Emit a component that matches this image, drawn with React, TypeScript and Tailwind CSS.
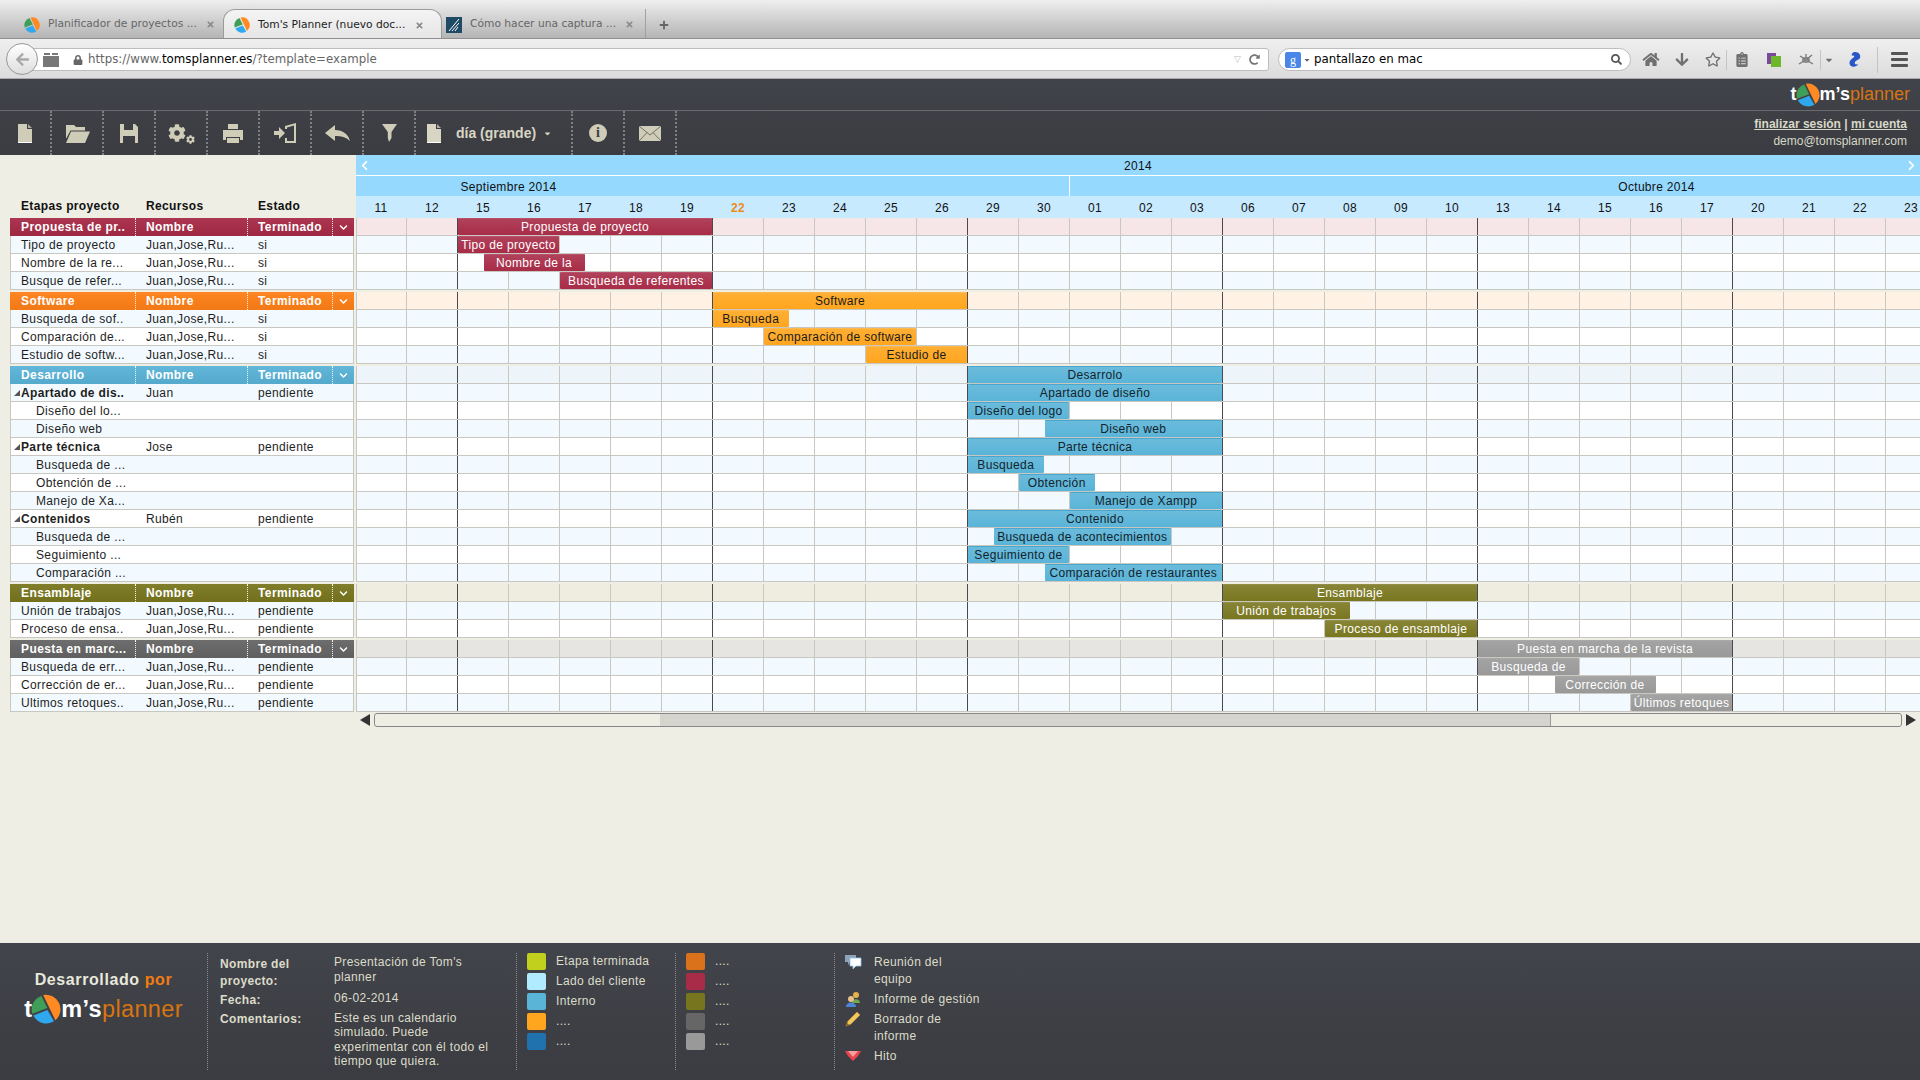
import React from "react";
import {
  FaCog, FaHome, FaArrowDown, FaRegStar, FaClipboardList, FaSearch, FaArrowLeft, FaRedoAlt, FaLock, FaTimes, FaPlus, FaChevronDown, FaChevronLeft, FaChevronRight, FaCaretDown,
} from "react-icons/fa";

const W = 51;
const days = ["11","12","15","16","17","18","19","22","23","24","25","26","29","30","01","02","03","06","07","08","09","10","13","14","15","16","17","20","21","22","23"];

type Bar = { s: number; e: number; t: string };
type Row = { n: string; r?: string; st?: string; kind?: "bold" | "sub"; bar?: Bar };
type Group = { title: string; head: string; tint: string; barBg: string; barText: string; bar: Bar; rows: Row[] };

const JJ = "Juan,Jose,Ru...";
const groups: Group[] = [
  {
    title: "Propuesta de pr..", head: "bg-[#a82c48]", tint: "bg-[#f6e6e8]", barBg: "bg-[#a82c48] border-[#b85069]", barText: "text-white",
    bar: { s: 2, e: 7, t: "Propuesta de proyecto" },
    rows: [
      { n: "Tipo de proyecto", r: JJ, st: "si", bar: { s: 2, e: 4, t: "Tipo de proyecto" } },
      { n: "Nombre de la re...", r: JJ, st: "si", bar: { s: 2.5, e: 4.5, t: "Nombre de la" } },
      { n: "Busque de refer...", r: JJ, st: "si", bar: { s: 4, e: 7, t: "Busqueda de referentes" } },
    ],
  },
  {
    title: "Software", head: "bg-[#ff8118]", tint: "bg-[#fff1e4]", barBg: "bg-[#ffa61e] border-[#ffb84e]", barText: "text-[#1c1c1c]",
    bar: { s: 7, e: 12, t: "Software" },
    rows: [
      { n: "Busqueda de sof..", r: JJ, st: "si", bar: { s: 7, e: 8.5, t: "Busqueda" } },
      { n: "Comparación de...", r: JJ, st: "si", bar: { s: 8, e: 11, t: "Comparación de software" } },
      { n: "Estudio de softw...", r: JJ, st: "si", bar: { s: 10, e: 12, t: "Estudio de" } },
    ],
  },
  {
    title: "Desarrollo", head: "bg-[#5ab4d8]", tint: "bg-[#eef5fa]", barBg: "bg-[#5ab4d8] border-[#49a7cf]", barText: "text-[#14232b]",
    bar: { s: 12, e: 17, t: "Desarrolo" },
    rows: [
      { n: "Apartado de dis..", r: "Juan", st: "pendiente", kind: "bold", bar: { s: 12, e: 17, t: "Apartado de diseño" } },
      { n: "Diseño del lo...", kind: "sub", bar: { s: 12, e: 14, t: "Diseño del logo" } },
      { n: "Diseño web", kind: "sub", bar: { s: 13.5, e: 17, t: "Diseño web" } },
      { n: "Parte técnica", r: "Jose", st: "pendiente", kind: "bold", bar: { s: 12, e: 17, t: "Parte técnica" } },
      { n: "Busqueda de ...", kind: "sub", bar: { s: 12, e: 13.5, t: "Busqueda" } },
      { n: "Obtención de ...", kind: "sub", bar: { s: 13, e: 14.5, t: "Obtención" } },
      { n: "Manejo de Xa...", kind: "sub", bar: { s: 14, e: 17, t: "Manejo de Xampp" } },
      { n: "Contenidos", r: "Rubén", st: "pendiente", kind: "bold", bar: { s: 12, e: 17, t: "Contenido" } },
      { n: "Busqueda de ...", kind: "sub", bar: { s: 12.5, e: 16, t: "Busqueda de acontecimientos" } },
      { n: "Seguimiento ...", kind: "sub", bar: { s: 12, e: 14, t: "Seguimiento de" } },
      { n: "Comparación ...", kind: "sub", bar: { s: 13.5, e: 17, t: "Comparación de restaurantes" } },
    ],
  },
  {
    title: "Ensamblaje", head: "bg-[#7a7720]", tint: "bg-[#efece0]", barBg: "bg-[#7a7720] border-[#908e46]", barText: "text-white",
    bar: { s: 17, e: 22, t: "Ensamblaje" },
    rows: [
      { n: "Unión de trabajos", r: JJ, st: "pendiente", bar: { s: 17, e: 19.5, t: "Unión de trabajos" } },
      { n: "Proceso de ensa..", r: JJ, st: "pendiente", bar: { s: 19, e: 22, t: "Proceso de ensamblaje" } },
    ],
  },
  {
    title: "Puesta en marc...", head: "bg-[#666666]", tint: "bg-[#e6e5e1]", barBg: "bg-[#999999] border-[#a8a8a8]", barText: "text-white",
    bar: { s: 22, e: 27, t: "Puesta en marcha de la revista" },
    rows: [
      { n: "Busqueda de err...", r: JJ, st: "pendiente", bar: { s: 22, e: 24, t: "Busqueda de" } },
      { n: "Corrección de er...", r: JJ, st: "pendiente", bar: { s: 23.5, e: 25.5, t: "Corrección de" } },
      { n: "Ultimos retoques..", r: JJ, st: "pendiente", bar: { s: 25, e: 27, t: "Últimos retoques" } },
    ],
  },
];

function Pie({ size, className = "" }: { size: number; className?: string }) {
  return (
    <svg width={size} height={size} viewBox="0 0 32 32" className={`shrink-0 ${className}`}>
      <path d="M11 2 L17.5 15 L1.5 21 A15 15 0 0 1 11 2 Z" fill="#3f9f58" />
      <path d="M13 1 A15.5 15.5 0 0 1 26 28 Z" fill="#ff8a24" />
      <path d="M2.5 23 L17.5 17 L24.5 29 A15.5 15.5 0 0 1 2.5 23 Z" fill="#2fa8ee" />
    </svg>
  );
}

function Logo({ h, size, pie }: { h: string; size: string; pie: number }) {
  return (
    <div className={`flex items-center font-['Liberation_Sans',sans-serif] ${h} ${size}`}>
      <span className="font-bold text-white">t</span>
      <Pie size={pie} className="-ml-[1px]" />
      <span className="font-bold text-white">m’s</span>
      <span className="text-[#d9740f]">planner</span>
    </div>
  );
}

function Bars({ b, cls, txt }: { b: Bar; cls: string; txt: string }) {
  return (
    <div
      className={`absolute top-0 h-[17px] rounded-[1px] border-t overflow-hidden whitespace-nowrap text-center leading-[17px] text-[12px] tracking-[0.35px] bg-linear-to-b from-white/10 to-transparent ${cls} ${txt}`}
      style={{ left: b.s * W, width: (b.e - b.s) * W - 1 }}
    >
      {b.t}
    </div>
  );
}

function Cells({ bg }: { bg: string }) {
  return (
    <>
      {days.map((d, i) => (
        <div
          key={i}
          className={`${i === 0 ? "w-[50px]" : "w-[51px]"} shrink-0 h-full border-l ${(i - 2) % 5 === 0 ? "border-[#4a4a4e]" : "border-[#c8c8c0]"} ${bg}`}
        />
      ))}
    </>
  );
}

function SideGroup({ g }: { g: Group }) {
  return (
    <div className="flex flex-col mb-[2px] w-[344px]">
      <div className={`flex h-[18px] items-center font-bold text-white text-[12px] tracking-[0.4px] ${g.head} bg-linear-to-b from-white/5 to-black/5`}>
        <div className="w-[126px] pl-[11px] h-full leading-[18px] border-r border-dotted border-white/90">{g.title}</div>
        <div className="w-[112px] pl-[10px] h-full leading-[18px] border-r border-dotted border-white/90">Nombre</div>
        <div className="w-[85px] pl-[10px] h-full leading-[18px] border-r border-dotted border-white/90">Terminado</div>
        <div className="flex-1 flex justify-center"><FaChevronDown className="text-white text-[9px]" /></div>
      </div>
      {g.rows.map((r, i) => (
        <div
          key={i}
          className={`flex h-[18px] items-center text-[12px] tracking-[0.35px] text-[#1e1e1e] border-b border-x border-[#c8c8c0] ${i % 2 === 0 ? "bg-[#f2faff]" : "bg-white"}`}
        >
          <div className={`w-[125px] h-full leading-[18px] whitespace-nowrap relative ${r.kind === "sub" ? "pl-[25px]" : "pl-[10px]"} ${r.kind === "bold" ? "font-bold" : ""}`}>
            {r.kind === "bold" && (
              <span className="absolute left-[3px] top-[6px] w-0 h-0 border-l-[6px] border-l-transparent border-b-[6px] border-b-[#555]" />
            )}
            {r.n}
          </div>
          <div className="w-[112px] pl-[10px] h-full leading-[18px] whitespace-nowrap">{r.r}</div>
          <div className="pl-[10px] h-full leading-[18px]">{r.st}</div>
        </div>
      ))}
    </div>
  );
}

function CalGroup({ g }: { g: Group }) {
  return (
    <div className="flex flex-col mb-[2px]">
      <div className="relative flex h-[18px] border-b border-[#c8c8c0]">
        <Cells bg={g.tint} />
        <Bars b={g.bar} cls={g.barBg} txt={g.barText} />
      </div>
      {g.rows.map((r, i) => (
        <div key={i} className="relative flex h-[18px] border-b border-[#c8c8c0]">
          <Cells bg={i % 2 === 0 ? "bg-[#f2faff]" : "bg-white"} />
          {r.bar && <Bars b={r.bar} cls={g.barBg} txt={g.barText} />}
        </div>
      ))}
    </div>
  );
}

function ToolIcon({ children }: { children: React.ReactNode }) {
  return (
    <div className="w-[52px] h-full flex items-center justify-center border-r-2 border-dotted border-[#7f8083] text-[#cfcdb7]">
      {children}
    </div>
  );
}

const FileIcon = () => (
  <svg width="14" height="19" viewBox="0 0 14 19" fill="currentColor">
    <path d="M0 0H9V5H14V19H0Z" />
    <path d="M10 0L14 4H10Z" opacity="0.75" />
    <rect y="18" width="14" height="1" fill="#fff" />
  </svg>
);

function Legend({ c, t }: { c: string; t: string }) {
  return (
    <div className="flex items-center h-[17px] mb-[3px]">
      <span className={`w-[19px] h-[17px] rounded-[2px] ${c}`} />
      <span className="ml-[10px]">{t}</span>
    </div>
  );
}

function Tab({ active, icon, text, x, close }: { active?: boolean; icon: React.ReactNode; text: string; x: string; close: string }) {
  return (
    <div className={`relative h-[29px] flex items-center ${x} ${active ? "bg-linear-to-b from-[#f4f4f4] to-[#e6e6e6] rounded-t-[12px] border border-b-0 border-[#9c9c9c] text-[#222]" : "text-[#666]"}`}>
      {icon}
      <span className="ml-[8px] whitespace-nowrap">{text}</span>
      <FaTimes className={`absolute top-[11px] text-[#8c8c8c] text-[9px] ${close}`} />
    </div>
  );
}

const Triangle = ({ right }: { right?: boolean }) => (
  <svg width="10" height="12" viewBox="0 0 10 12" className="shrink-0">
    <path d={right ? "M0 0L10 6L0 12Z" : "M10 0L0 6L10 12Z"} fill="#333" />
  </svg>
);

export default function App() {
  return (
    <div className="w-[1920px] h-[1080px] overflow-hidden flex flex-col bg-[#eeeee4] font-['Liberation_Sans',sans-serif]">
      {/* browser tabs */}
      <div className="h-[39px] shrink-0 flex items-end bg-linear-to-b from-[#efefef] to-[#b4b4b4] border-b border-[#8f8f8f] font-['DejaVu_Sans',sans-serif] text-[10.7px] pl-[16px]">
        <Tab x="w-[207px] pl-[8px] pt-[2px]" close="right-[8px]" icon={<Pie size={16} />} text="Planificador de proyectos ..." />
        <Tab active x="w-[219px] pl-[10px] pt-[2px]" close="right-[17px]" icon={<Pie size={16} />} text="Tom's Planner (nuevo doc..." />
        <Tab
          x="w-[203px] pl-[4px] pt-[2px]"
          close="right-[11px]"
          icon={
            <svg width="16" height="16" viewBox="0 0 16 16" className="shrink-0">
              <rect width="16" height="16" fill="#1f4a66" />
              <path d="M3 14L13 2M6 14L13 6M9 14l3-4" stroke="#fff" strokeWidth="1" />
            </svg>
          }
          text="Cómo hacer una captura ..."
        />
        <div className="h-[29px] w-[36px] border-l border-[#a0a0a0] flex items-center justify-center text-[#666] text-[10px] pt-[2px]"><FaPlus /></div>
      </div>
      {/* browser nav */}
      <div className="h-[40px] shrink-0 flex items-center bg-linear-to-b from-[#efefef] to-[#dcdcdc] border-b border-[#aaa] font-['DejaVu_Sans',sans-serif] text-[11.8px] pl-[6px] pt-[2px] relative">
        <div className="absolute left-[6px] top-[4px] w-[32px] h-[32px] rounded-full bg-linear-to-b from-white to-[#dedede] border border-[#999] flex items-center justify-center text-[#a8a8a8] text-[15px] z-10"><FaArrowLeft /></div>
        <div className="ml-[20px] w-[1243px] h-[23px] bg-white border border-[#bdbdbd] rounded-[3px] flex items-center pl-[16px] pr-[8px]">
          <svg width="16" height="14" viewBox="0 0 16 14" className="shrink-0"><path d="M0 3h16v11H0zM1 0h6v2H1zM9 0h6v2H9z" fill="#777" /></svg>
          <FaLock className="ml-[14px] text-[#666] text-[10px]" />
          <span className="ml-[5px] text-[#666] whitespace-nowrap">https://www.<span className="text-black">tomsplanner.es</span>/?template=example</span>
          <span className="ml-auto text-[#bbb] text-[9px]">▽</span>
          <FaRedoAlt className="ml-[8px] text-[#777] text-[11px]" />
        </div>
        <div className="ml-[9px] w-[353px] h-[23px] bg-white border border-[#bdbdbd] rounded-full flex items-center pl-[6px] pr-[8px] text-black">
          <span className="w-[16px] h-[16px] bg-[#4a86e8] rounded-[2px] text-white text-[12px] leading-[16px] text-center font-['Liberation_Serif',serif]">g</span>
          <FaCaretDown className="ml-[2px] text-[#666] text-[8px]" />
          <span className="ml-[3px]">pantallazo en mac</span>
          <FaSearch className="ml-auto text-[#555] text-[11px]" />
        </div>
        <div className="flex items-center text-[#707070] text-[15px] ml-[11px] h-full">
          <FaHome className="w-[18px]" />
          <FaArrowDown className="ml-[14px] w-[16px]" />
          <FaRegStar className="ml-[15px] w-[16px]" />
          <span className="w-px h-[20px] ml-[5px] bg-[#c4c4c4]" />
          <FaClipboardList className="ml-[8px] w-[14px]" />
          <svg width="16" height="16" viewBox="0 0 16 16" className="ml-[17px]"><rect x="1" y="1" width="9" height="11" fill="#7a4a9a" /><rect x="5" y="4" width="10" height="11" fill="#6cb82a" /></svg>
          <svg width="16" height="14" viewBox="0 0 16 14" className="ml-[16px]" fill="#8a8a8a"><ellipse cx="8" cy="7" rx="4" ry="3" /><path d="M2 3l5 3M14 2L9 6M1 11l5-3M15 11l-5-3M8 1v4" stroke="#777" strokeWidth="1.3" /></svg>
          <span className="w-px h-[20px] ml-[6px] bg-[#c4c4c4]" />
          <FaCaretDown className="ml-[3px] w-[10px] text-[10px]" />
          <svg width="14" height="18" viewBox="0 0 14 18" className="ml-[14px]"><path d="M7 1c4 0 6 3 5 6-1 2-4 2-5 4s1 3 3 2c-1 3-6 4-8 1-2-4 2-6 4-8 1-1-1-2-2-1C3 3 5 1 7 1z" fill="#2a55c8" /></svg>
          <span className="w-px h-[26px] ml-[15px] bg-[#c4c4c4]" />
          <div className="ml-[13px] w-[17px] flex flex-col gap-[3px]">
            <span className="h-[3px] rounded-[1px] bg-[#555]" />
            <span className="h-[3px] rounded-[1px] bg-[#555]" />
            <span className="h-[3px] rounded-[1px] bg-[#555]" />
          </div>
        </div>
      </div>
      {/* app header */}
      <div className="h-[76px] shrink-0 flex flex-col bg-linear-to-b from-[#41434a] to-[#3a3c41]">
        <div className="h-[32px] flex items-center justify-end pr-[10px] border-b border-[#6a6b6f]">
          <Logo h="h-[28px]" size="text-[18px]" pie={24} />
        </div>
        <div className="flex-1 flex">
          <ToolIcon><FileIcon /></ToolIcon>
          <ToolIcon>
            <svg width="25" height="19" viewBox="0 0 25 19" fill="currentColor"><path d="M1 1h8l2 2h9v3.5H5.5L1.5 14H1Z" /><path d="M6 7.5H25L20 19H1Z" /></svg>
          </ToolIcon>
          <ToolIcon>
            <svg width="18" height="19" viewBox="0 0 18 19" fill="currentColor"><path d="M0 0h4v6h9V0h2l3 3v16h-3v-7H3v7H0Z" /></svg>
          </ToolIcon>
          <ToolIcon>
            <div className="flex items-end">
              <FaCog className="text-[18px]" />
              <FaCog className="text-[9px] -mb-[2px]" />
            </div>
          </ToolIcon>
          <ToolIcon>
            <svg width="20" height="19" viewBox="0 0 20 19" fill="currentColor"><path d="M5 0h10v5H5zM0 6h20v10h-3v-3H3v3H0zM4 14h12v5H4z" /></svg>
          </ToolIcon>
          <ToolIcon>
            <svg width="22" height="20" viewBox="0 0 22 20" fill="currentColor"><path d="M0 8h5V4l6 6-6 6v-4H0z" /><path fillRule="evenodd" d="M11 3l11-3v20H11v-5h2v3h7V2.5L13 4.5V6h-2z" /></svg>
          </ToolIcon>
          <ToolIcon>
            <svg width="25" height="16" viewBox="0 0 25 16" fill="currentColor"><path d="M0 8L10 0v5c8 0 13 4 15 11-4-4-9-5-15-5v5Z" /></svg>
          </ToolIcon>
          <ToolIcon>
            <svg width="15" height="18" viewBox="0 0 15 18" fill="currentColor"><path d="M0 0h15L9.5 8v6L7 18 5.8 14V8Z" /></svg>
          </ToolIcon>
          <div className="w-[157px] h-full flex items-center border-r-2 border-dotted border-[#7f8083] text-[#d8d6c2] pl-[11px]">
            <FileIcon />
            <span className="ml-[15px] font-bold text-[14px] whitespace-nowrap">día (grande)</span>
            <FaCaretDown className="ml-[7px] text-[9px]" />
          </div>
          <ToolIcon>
            <div className="w-[18px] h-[18px] rounded-full bg-[#cfcdb7] text-[#3c3e43] text-center font-bold text-[14px] leading-[18px] font-['Liberation_Serif',serif]">i</div>
          </ToolIcon>
          <ToolIcon>
            <svg width="22" height="15" viewBox="0 0 22 15"><rect width="22" height="15" fill="currentColor" /><path d="M0 0L11 9L22 0M0 15L8 6.5M22 15L14 6.5" fill="none" stroke="#5b5c58" strokeWidth="0.8" /></svg>
          </ToolIcon>
          <div className="flex-1 flex flex-col items-end pr-[13px] pt-[5px] text-[12px] text-[#d8d8c8]">
            <div className="font-bold leading-[17px]"><span className="underline">finalizar sesión</span> | <span className="underline">mi cuenta</span></div>
            <div className="leading-[17px]">demo@tomsplanner.com</div>
          </div>
        </div>
      </div>
      {/* planner */}
      <div className="flex-1 flex items-start pl-[10px] text-[#1e1e1e] overflow-hidden">
        <div className="w-[346px] shrink-0">
          <div className="h-[63px] flex items-end pb-[3px] font-bold text-[12px] tracking-[0.35px] text-[#111]">
            <div className="w-[126px] pl-[11px]">Etapas proyecto</div>
            <div className="w-[112px] pl-[10px]">Recursos</div>
            <div className="pl-[10px]">Estado</div>
          </div>
          {groups.map((g, i) => <SideGroup key={i} g={g} />)}
        </div>
        <div className="flex-1 min-w-0 overflow-hidden">
          <div className="h-[21px] pt-[1px] bg-[#95d9ff] border-b border-white flex items-center justify-between px-[3px] text-[12px] tracking-[0.3px] text-[#111]">
            <FaChevronLeft className="text-white text-[11px]" />
            <span>2014</span>
            <FaChevronRight className="text-white text-[11px]" />
          </div>
          <div className="h-[20px] bg-[#95d9ff] flex text-[12px] tracking-[0.3px] text-[#111] w-[1581px]">
            <div className="w-[714px] h-full text-center leading-[22px] border-r border-white pr-[408px]">Septiembre 2014</div>
            <div className="flex-1 text-center leading-[22px] pl-[306px]">Octubre 2014</div>
          </div>
          <div className="h-[22px] bg-[#c8eaff] flex overflow-hidden text-[12px] tracking-[0.3px] text-[#111]">
            <div className="flex -ml-[0.5px]">
              {days.map((d, i) => (
                <div key={i} className={`w-[51px] shrink-0 text-center leading-[24px] ${d === "22" && i === 7 ? "text-[#f08a1d] font-bold" : ""}`}>{d}</div>
              ))}
            </div>
          </div>
          {groups.map((g, i) => <CalGroup key={i} g={g} />)}
          <div className="h-[14px] mt-[-1px] flex items-center w-[1564px]">
            <span className="ml-[4px]"><Triangle /></span>
            <div className="ml-[4px] w-[1528px] h-[14px] shrink-0 border border-[#888] rounded-[3px] bg-[#eeeee4] flex overflow-hidden">
              <div className="ml-[285px] w-[891px] h-full bg-[#d5d5cd] border-r border-[#999]" />
            </div>
            <span className="ml-[4px]"><Triangle right /></span>
          </div>
        </div>
      </div>
      {/* footer */}
      <div className="h-[137px] shrink-0 flex bg-linear-to-b from-[#42444b] to-[#3a3c41] pt-[10px] text-[12px] leading-[14.5px] tracking-[0.35px] text-[#dcdcc9]">
        <div className="w-[207px] h-[117px] flex flex-col items-center pt-[18px]">
          <div className="font-bold text-[16px] tracking-[0.6px] leading-[18px] text-[#e8e8dc]">Desarrollado <span className="text-[#f07d10]">por</span></div>
          <Logo h="h-[34px] mt-[3px]" size="text-[23.5px]" pie={30} />
        </div>
        <div className="w-[309px] h-[117px] border-l border-dotted border-[#8a8b8c] flex pl-[12px]">
          <div className="w-[114px] font-bold flex flex-col gap-[2px] pt-[3px]">
            <div className="leading-[17px]">Nombre del<br />proyecto:</div>
            <div className="leading-[17px]">Fecha:</div>
            <div className="leading-[17px]">Comentarios:</div>
          </div>
          <div className="w-[165px] flex flex-col gap-[6px] pt-[2px]">
            <div>Presentación de Tom's planner</div>
            <div className="pt-[1px]">06-02-2014</div>
            <div className="-mt-[1px]">Este es un calendario simulado. Puede experimentar con él todo el tiempo que quiera.</div>
          </div>
        </div>
        <div className="w-[159px] h-[117px] border-l border-dotted border-[#8a8b8c] pl-[10px]">
          <Legend c="bg-[#c1d01c]" t="Etapa terminada" />
          <Legend c="bg-[#b0ebff]" t="Lado del cliente" />
          <Legend c="bg-[#5ab4d8]" t="Interno" />
          <Legend c="bg-[#ffa61e]" t="...." />
          <Legend c="bg-[#1f72ae]" t="...." />
        </div>
        <div className="w-[159px] h-[117px] border-l border-dotted border-[#8a8b8c] pl-[10px]">
          <Legend c="bg-[#da711b]" t="...." />
          <Legend c="bg-[#a82c48]" t="...." />
          <Legend c="bg-[#77761f]" t="...." />
          <Legend c="bg-[#666666]" t="...." />
          <Legend c="bg-[#999999]" t="...." />
        </div>
        <div className="w-[200px] h-[117px] border-l border-dotted border-[#8a8b8c] pl-[10px] flex flex-col gap-[3px] pt-[1px] leading-[17px]">
          <div className="flex">
            <svg width="29" height="16" viewBox="0 0 29 16" className="shrink-0">
              <path d="M0 1h11v7H5l-2 3V8H0Z" fill="#8fa3b8" />
              <path d="M5 4h11v8h-5l-3 3v-3H5Z" fill="#fff" stroke="#8ec4ee" strokeWidth="0.8" />
            </svg>
            <div>Reunión del<br />equipo</div>
          </div>
          <div className="flex">
            <svg width="29" height="16" viewBox="0 0 29 16" className="shrink-0">
              <circle cx="11" cy="4" r="3" fill="#e8b04a" /><path d="M7 12c0-5 8-5 8 0Z" fill="#74a84a" />
              <circle cx="6" cy="8" r="3" fill="#e8c08a" /><path d="M1 16c0-6 10-6 10 0Z" fill="#4a86d8" />
            </svg>
            <div>Informe de gestión</div>
          </div>
          <div className="flex">
            <svg width="29" height="16" viewBox="0 0 29 16" className="shrink-0">
              <path d="M1 15l2-5L12 1l3 3-9 9Z" fill="#f0c860" stroke="#c48a30" strokeWidth="0.8" />
              <path d="M1 15l1-3 2 2Z" fill="#8a5a20" />
            </svg>
            <div>Borrador de<br />informe</div>
          </div>
          <div className="flex">
            <svg width="29" height="16" viewBox="0 0 29 16" className="shrink-0">
              <path d="M0 3h16l-3 5-5 5-5-5Z" fill="#e8454e" />
              <path d="M3 3h10l-5 6Z" fill="#f8a0a0" />
            </svg>
            <div>Hito</div>
          </div>
        </div>
      </div>
    </div>
  );
}
